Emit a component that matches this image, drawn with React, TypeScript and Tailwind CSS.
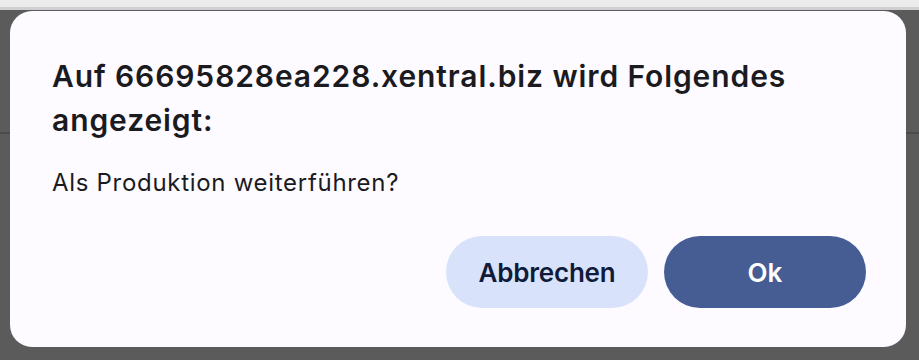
export default function App() {
  return (
    <div className="flex h-[360px] w-[919px] flex-col overflow-hidden bg-[#5b5b5c] font-['Inter','Noto_Sans',sans-serif]">
      <div className="h-[10px] shrink-0 border-b-[3px] border-[#cfcfd1] bg-[#ececed]" />
      <div className="relative flex-1">
        <div className="absolute inset-x-0 top-[122px] h-[2px] bg-[#4a4a4b]" />
        <div className="relative mx-[10px] mt-[1px] flex h-[336px] w-[896px] flex-col rounded-[22px] bg-[#fdfbff] px-[42px] pt-[43px] text-[#1b1b1f]">
          <h2 className="text-[30px] font-semibold leading-[44px] tracking-[0.9px]">
            Auf 66695828ea228.xentral.biz wird Folgendes angezeigt:
          </h2>
          <p className="mt-[27px] text-[24px] leading-[28px] tracking-[0.7px]">Als Produktion weiterführen?</p>
          <div className="mt-auto mb-[39px] flex justify-end gap-4">
            <button
              type="button"
              className="h-[72px] w-[202px] rounded-full bg-[#d8e2fb] text-[26px] font-semibold tracking-[-0.2px] text-[#101b3a]"
            >
              Abbrechen
            </button>
            <button
              type="button"
              className="-mr-[2px] h-[72px] w-[202px] rounded-full bg-[#465d94] text-[26px] font-semibold text-white"
            >
              Ok
            </button>
          </div>
        </div>
      </div>
    </div>
  )
}
